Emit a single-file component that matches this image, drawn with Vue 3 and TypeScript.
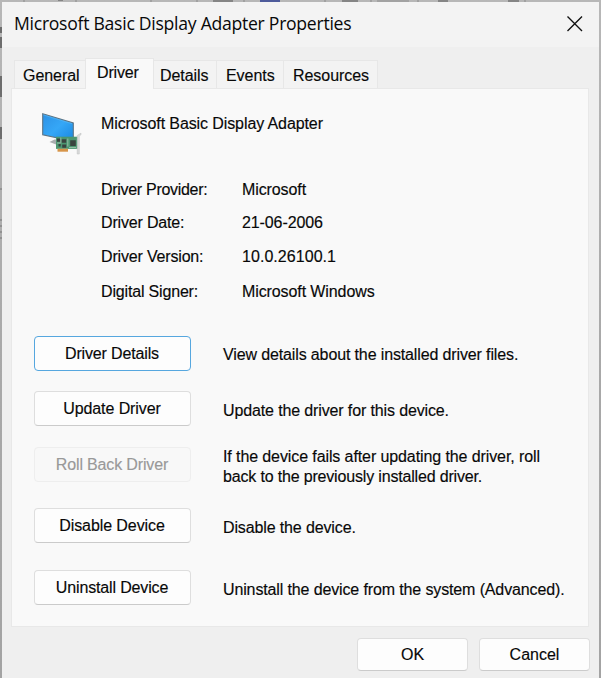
<script setup lang="ts">
interface Tab { label: string; key: string; active?: boolean }
interface Action { label: string; text: string[]; key: string; state?: string }

const tabs: Tab[] = [
  { label: 'General', key: 'general' },
  { label: 'Driver', key: 'driver', active: true },
  { label: 'Details', key: 'details' },
  { label: 'Events', key: 'events' },
  { label: 'Resources', key: 'resources' },
]

const facts = [
  { name: 'Driver Provider:', value: 'Microsoft', key: 'provider' },
  { name: 'Driver Date:', value: '21-06-2006', key: 'date' },
  { name: 'Driver Version:', value: '10.0.26100.1', key: 'version' },
  { name: 'Digital Signer:', value: 'Microsoft Windows', key: 'signer' },
]

const actions: Action[] = [
  { key: 'details-row', label: 'Driver Details', text: ['View details about the installed driver files.'], state: 'focused' },
  { key: 'update-row', label: 'Update Driver', text: ['Update the driver for this device.'] },
  { key: 'rollback-row', label: 'Roll Back Driver', text: ['If the device fails after updating the driver, roll', 'back to the previously installed driver.'], state: 'disabled' },
  { key: 'disable-row', label: 'Disable Device', text: ['Disable the device.'] },
  { key: 'uninstall-row', label: 'Uninstall Device', text: ['Uninstall the device from the system (Advanced).'] },
]
</script>

<template>
  <div class="desktop">
    <svg class="backdrop" width="601" height="678" viewBox="0 0 601 678" aria-hidden="true">
      <path d="M24 0v2M76 0v2M151 0v2M197 0v2M244 0v2M325 0v2M371 0v2M418 0v2M525 0v2" stroke="#8b8b8b" />
      <path d="M58 0h5M213 1h20M342 1h16M438 1h10M508 1h11" stroke="#858585" stroke-width="2" />
      <path d="M377 1h32" stroke="#a2a2a2" stroke-width="2" />
      <path d="M260 1h20" stroke="#4e5b9b" stroke-width="2" />
      <path d="M1 27v6M1 37v11M1 76v21M1 127v12" stroke="#6d6d6d" stroke-width="2" />
      <path d="M0 189h2M0 220h2M0 226h2M0 232h2M0 238h2" stroke="#777" />
    </svg>
    <main class="window">
      <header class="titlebar">
        <h1>Microsoft Basic Display Adapter Properties</h1>
        <svg class="close" width="18" height="18" viewBox="0 0 18 18">
          <path d="M1.5 1.5 16 16M16 1.5 1.5 16" fill="none" stroke="#111" stroke-width="1.35" />
        </svg>
      </header>

      <nav class="tabs">
        <div v-for="tab in tabs" :key="tab.key" class="tab" :class="[tab.key, { active: tab.active }]">
          <span>{{ tab.label }}</span>
        </div>
      </nav>

      <section class="panel">
        <div class="device">
          <svg width="42" height="44" viewBox="0 1.5 42 44">
            <defs>
              <linearGradient id="screen" x1="0" y1="0" x2="1" y2="1">
                <stop offset="0" stop-color="#2c91e5" />
                <stop offset=".5" stop-color="#35a7f7" />
                <stop offset="1" stop-color="#1886df" />
              </linearGradient>
            </defs>
            <path d="M9.5 31.5l5-2.4h3v5.4l-4-1.6z" fill="#a9acae" />
            <path d="M2.7 3.2 33.3 12.4v18.3L2.7 24.3z" fill="url(#screen)" stroke="#5d7484" stroke-width="1.1" />
            <path d="M3.3 4.4 32 13.2" stroke="#55b6f5" stroke-width=".7" />
            <path d="M16 26.2h22.5v12.2H16z" fill="#4b9670" />
            <path d="M17.5 38.2h10.5v3H17.5z" fill="#d7954a" />
            <path d="M17 28h3.4v3.2H17zM21.6 28.7h4.6v3.6h-4.6zM18.5 33.5h2.2v2.6h-2.2zM22.2 34h4v3.2h-4zM30.2 29.8h5.6v5.6h-5.6z" fill="#39433f" />
            <path d="M20.8 27v6M27.8 28v8M17 32.5h3M29 37h7" stroke="#9fc0ad" stroke-width=".9" />
            <path d="M37.2 25 41 22.6v1.7l-1.7 1V43.5h-2.1z" fill="#d9dada" stroke="#bcbebe" stroke-width=".5" />
          </svg>
          <strong>Microsoft Basic Display Adapter</strong>
        </div>

        <dl class="facts">
          <template v-for="fact in facts" :key="fact.key">
            <dt :class="fact.key">{{ fact.name }}</dt>
            <dd :class="fact.key">{{ fact.value }}</dd>
          </template>
        </dl>

        <div class="actions">
          <div v-for="action in actions" :key="action.key" class="action" :class="action.key">
            <button :class="action.state" :disabled="action.state === 'disabled'">{{ action.label }}</button>
            <p><span v-for="line in action.text" :key="line">{{ line }}</span></p>
          </div>
        </div>
      </section>

      <footer>
        <button>OK</button>
        <button>Cancel</button>
      </footer>
    </main>
  </div>
</template>

<style>
body { margin: 0; overflow: hidden; }
</style>

<style scoped>
* { box-sizing: border-box; }
.desktop {
  position: relative;
  width: 601px;
  height: 678px;
  padding: 2px 2px 0;
  background: linear-gradient(#b7b7b7, #a9a9a9 50%, #a3a3a3);
  color: #080808;
  font: 16px/20px "Liberation Sans", Arial, sans-serif;
  letter-spacing: -.1px;
  -webkit-text-stroke: .15px;
  white-space: nowrap;
}
.backdrop { position: absolute; left: 0; top: 0; }
.window {
  position: relative;
  display: flex;
  flex-direction: column;
  height: 676px;
  background: #efefef;
}
.titlebar {
  display: flex;
  justify-content: space-between;
  height: 45px;
  padding: 8px 15px 0 12px;
  background: #f3f3f3;
}
h1 {
  margin: 0;
  font: 400 17.6px/26px "Open Sans", "Noto Sans", sans-serif;
  letter-spacing: -.27px;
  -webkit-text-stroke: 0;
}
.close { margin-top: 5px; }
.tabs {
  position: relative;
  z-index: 1;
  display: flex;
  align-items: flex-end;
  height: 41px;
  padding-left: 12px;
}
.tab {
  height: 28px;
  padding: 5px 0 0 9px;
  border: 1px solid #e7e7e7;
  border-left: 0;
  border-bottom: 0;
  background: #f3f3f3;
  letter-spacing: -.05px;
}
.general { width: 71px; padding-left: 8px; border-left: 1px solid #e7e7e7; border-right: 0; }
.driver { width: 69px; }
.details { width: 63px; padding-left: 6px; }
.events { width: 67px; }
.resources { width: 94px; }
.tab.active {
  height: 31px;
  margin-bottom: -1px;
  padding: 4px 0 0 11px;
  border-left: 1px solid #e7e7e7;
  background: #f9f9f9;
  letter-spacing: -.15px;
}
.panel {
  width: 578px;
  height: 539px;
  margin-left: 9px;
  padding-left: 22px;
  border: 1px solid #e8e8e8;
  background: #f9f9f9;
}
.device { display: flex; height: 91px; padding-top: 23px; }
.device svg { margin-left: 6px; }
.device strong { margin: 2px 0 0 19px; font-weight: 400; }
.facts {
  display: grid;
  grid-template-columns: 141px 1fr;
  grid-template-rows: 33px 34px 35px 54px;
  margin: 0 0 0 67px;
}
dt { letter-spacing: -.17px; }
dt.provider { letter-spacing: -.3px; }
dd { margin: 0; }
dd.version { letter-spacing: .05px; }
.actions { display: flex; flex-direction: column; }
.action { display: flex; gap: 32px; height: 35px; margin-bottom: 21px; }
.details-row { margin-bottom: 20px; }
.rollback-row { margin-bottom: 26px; }
.disable-row { margin-bottom: 27px; }
.action p { margin: 9px 0 0; letter-spacing: -.13px; }
.action p span { display: block; }
.rollback-row p { margin-top: 0; letter-spacing: -.1px; }
.rollback-row p span + span { letter-spacing: -.17px; }
.update-row p, .disable-row p, .uninstall-row p { margin-top: 10px; }
button {
  height: 35px;
  padding: 1px 0 0;
  border: 1px solid #dedede;
  border-bottom-color: #cbcbcb;
  border-radius: 4px;
  background: #fdfdfd;
  color: #080808;
  font: inherit;
  letter-spacing: inherit;
}
.action button { width: 157px; padding-right: 1px; letter-spacing: -.15px; }
.update-row button, .disable-row button { letter-spacing: -.08px; }
button.focused { border-color: #56a7df; }
button.disabled { border-color: #eee; background: #f8f8f8; color: #999; }
footer { display: flex; justify-content: flex-end; gap: 11px; padding: 11px 9px 0 0; }
footer button { width: 111px; height: 33px; padding: 0; letter-spacing: 0; }
</style>
